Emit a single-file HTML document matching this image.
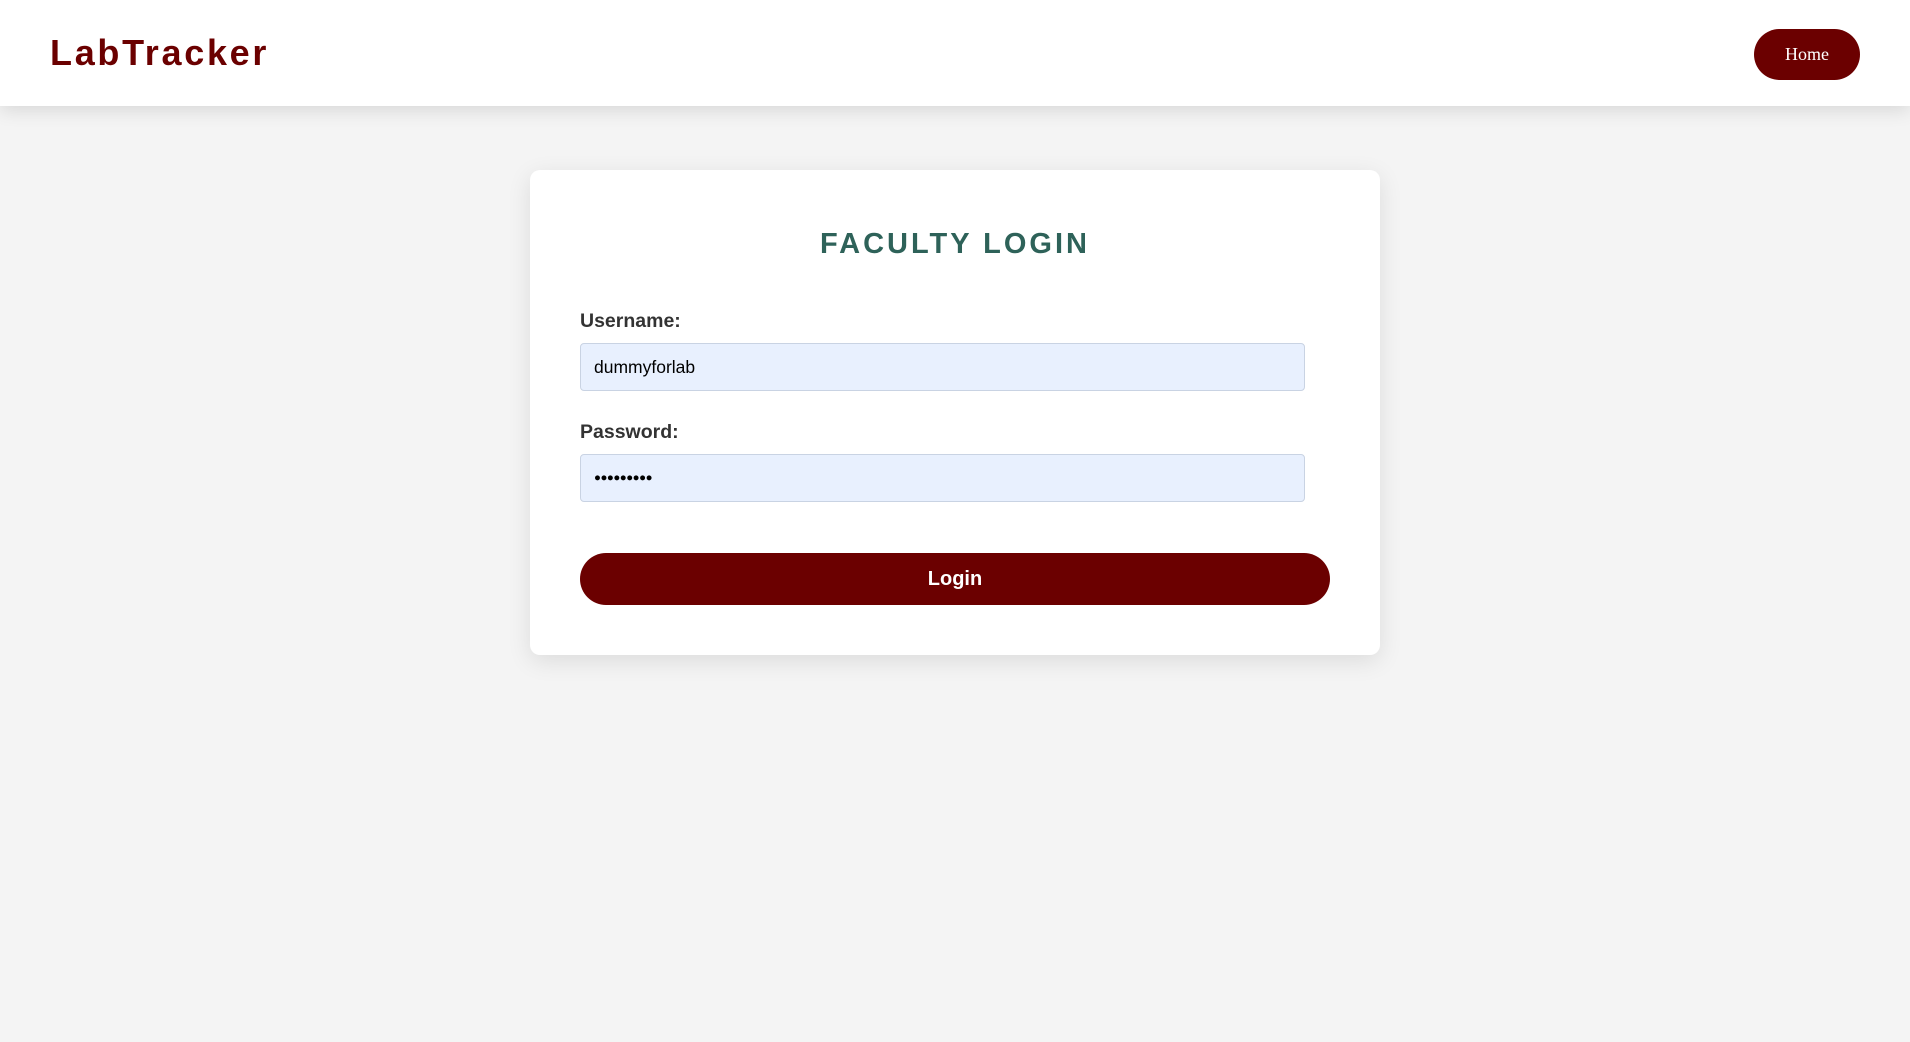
<!DOCTYPE html>
<html><head><meta charset="utf-8"><style>
*{margin:0;padding:0;box-sizing:border-box}
body{width:1910px;height:1042px;background:#f4f4f4;font-family:"Liberation Sans",Arial,sans-serif;position:relative;overflow:hidden}
.hdr{position:absolute;left:0;top:0;width:1910px;height:106px;background:#fff;box-shadow:0 4px 18px rgba(0,0,0,0.12)}
.logo{position:absolute;left:50px;top:31px;font-size:36px;font-weight:bold;color:#6b0000;letter-spacing:2.7px;line-height:44px}
.home{position:absolute;left:1754px;top:29px;width:106px;height:51px;border-radius:26px;background:#6b0000;color:#fff;font-family:"Liberation Serif",serif;font-size:18px;line-height:51px;text-align:center}
.card{position:absolute;left:530px;top:170px;width:850px;height:485px;background:#fff;border-radius:10px;box-shadow:0 6px 24px rgba(0,0,0,0.1)}
.title{position:absolute;width:850px;top:226px;text-align:center;font-size:29px;font-weight:bold;letter-spacing:3px;color:#2e6259;line-height:36px}
.lbl{position:absolute;left:580px;font-size:19.5px;font-weight:bold;color:#333;line-height:24px}
.inp{position:absolute;left:580px;width:725px;height:48px;background:#e8f0fe;border:1px solid #c9d3e3;border-radius:4px;font-size:17.5px;color:#000;padding-left:13px;line-height:46px}
.btn{position:absolute;left:580px;top:553px;width:750px;height:52px;border-radius:26px;background:#6b0000;color:#fff;font-size:20px;font-weight:bold;text-align:center;line-height:52px}
</style></head><body>
<div class="hdr"><div class="logo">LabTracker</div><div class="home">Home</div></div>
<div class="card"></div>
<div class="title" style="left:530px">FACULTY LOGIN</div>
<div class="lbl" style="top:309px">Username:</div>
<div class="inp" style="top:343px">dummyforlab</div>
<div class="lbl" style="top:420px">Password:</div>
<div class="inp" style="top:454px;font-size:11.5px;letter-spacing:-0.5px">●●●●●●●●●</div>
<div class="btn">Login</div>
</body></html>
